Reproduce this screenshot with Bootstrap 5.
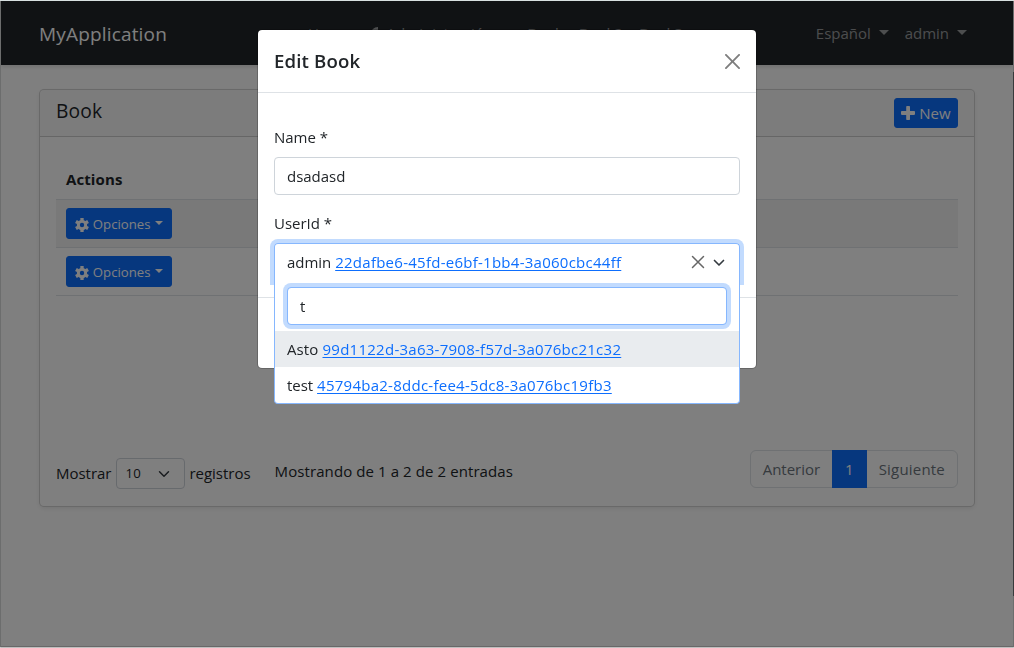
<!DOCTYPE html>
<html lang="es" class="h-100">
<head>
<meta charset="utf-8">
<meta name="viewport" content="width=device-width, initial-scale=1">
<title>MyApplication - Book</title>
<link href="https://cdn.jsdelivr.net/npm/bootstrap@5.3.0/dist/css/bootstrap.min.css" rel="stylesheet">
<style>
  body { font-family: "Open Sans", "Noto Sans", sans-serif; font-size: 15px; line-height: 24px; letter-spacing: -.02px; color: #212529; overflow: hidden; }
  .app-window { position: relative; height: 648px; border: 1px solid #d8dada; border-top-color: #d8e0e0; border-bottom-color: #bfbfbf; overflow: hidden; }
  .app-window::after { content: ""; position: absolute; top: 0; bottom: 0; left: 0; right: 0; border-bottom: 1px solid #d0d0d0; }
  .window-edge { position: fixed; top: 72px; right: 0; width: 1px; height: 524px; background: #707478; }
  .app-nav { height: 64px; padding: 0 38px; box-shadow: 0 2px 4px rgba(0,0,0,.12); }
  .app-nav .navbar-brand { font-size: 19px; line-height: 30px; letter-spacing: .17px; padding: 2px 0 0; margin: 0; width: 261px; }
  .app-nav .nav-link { color: rgba(255,255,255,.55); padding: 8px; white-space: nowrap; }
  .app-nav .dropdown-toggle::after { margin-left: 8px; border-top-width: 5px; border-left-width: 5px; border-right-width: 5px; vertical-align: 4px; }
  .app-nav .site-links .nav-link { line-height: 22px; }
  .app-nav .site-links .dropdown-toggle { letter-spacing: .1px; }
  .app-nav .site-links .dropdown-toggle span { margin-left: 2px; }
  .app-card { margin: 24px 38px 0; height: 418px; border-radius: 5px; box-shadow: 0 2px 4px rgba(0,0,0,.075); }
  .app-card .card-header { height: 47px; padding: 8px 16px; }
  .card-heading { font-size: 19.200px; line-height: 26px; font-weight: 500; letter-spacing: .2px; margin: 0; }
  .btn-new { width: 64px; height: 30px; padding: 0; font-size: 15px; line-height: 28px; border-radius: 3px; }
  .book-table { margin: 22px 0 0; }
  .book-table th { height: 40px; padding: 8px 10px; border-color: #dee2e6; letter-spacing: .1px; }
  .book-table td { height: 48px; padding: 8px 10px; border-color: #dee2e6; }
  .book-table tr.odd-row td { background: #f2f2f2; }
  .btn-options { width: 106px; height: 31px; padding: 1px 0 0; font-size: 13.2px; line-height: 28px; border-radius: 3px; }
  .btn-options::after { margin-left: 4px !important; border-top-width: 4px !important; border-left-width: 4px !important; border-right-width: 4px !important; vertical-align: 4px !important; }
  .table-foot { height: 56px; padding: 0 16px 18px; }
  .length-label { line-height: 22px; padding-bottom: 2px; }
  .length-select { width: 69px; height: 31px; padding: 3px 8px; font-size: 13.2px; background-position: right 12px center; margin: 0 4px 0 5px; letter-spacing: .2px; border-radius: 4px; border-color: #ced4da; }
  .table-info-text { padding-top: 9px; letter-spacing: .09px; margin-left: 24px; }
  .app-pages .page-link { height: 38px; padding: 6px 12px; color: #6c757d; border-color: #dee2e6; background: #fff; font-size: 15px; }
  .app-pages .page-item:last-child .page-link { letter-spacing: .2px; }
  .app-pages .active .page-link { background: #0d6efd; border-color: #0d6efd; color: #fff; }
  .modal-backdrop { top: 1px; height: 646px; }
  .edit-dialog { width: 500px; max-width: 500px; margin: 29px auto; }
  .edit-dialog .modal-content { height: 340px; border-radius: 5px; border-color: rgba(0,0,0,.2); }
  .edit-dialog .modal-header { height: 63px; padding: 16px; }
  .edit-dialog .btn-close { margin: -8px -8px -8px auto; }
  .edit-dialog .modal-title { font-size: 18.6px; line-height: 30px; font-weight: 600; letter-spacing: .15px; }
  .edit-dialog .modal-body { padding: 32px 16px 0; height: 204px; flex: none; }
  .edit-dialog .form-label { display: block; line-height: 24px; margin: 0 0 8px; color: #212529; }
  .edit-dialog .form-control { height: 38px; padding: 6px 12px; font-size: 15px; line-height: 24px; border-radius: 4px; letter-spacing: inherit; border-color: #ced4da; }
  .user-select { height: 42px; position: relative; }
  .user-value { height: 42px; padding: 6px 14px 12px 12px; border: 1px solid #86b7fe; border-bottom: 0; border-radius: 4px 4px 0 0; box-shadow: 0 0 0 4px #c2dbfe; clip-path: inset(-4px -4px 0 -4px); }
  .user-menu { position: absolute; top: 38px; left: 0; right: 0; height: 123px; background: #fff; border: 1px solid #86b7fe; border-top: 0; border-radius: 0 0 4px 4px; z-index: 3; }
  .user-search { margin: 6px 12px 6px; }
  .edit-dialog .user-search .form-control { border-color: #86b7fe; box-shadow: 0 0 0 4px #c2dbfe; }
  .user-option { height: 36px; padding: 6px 12px; }
  .user-option.highlighted { background: #e9ecef; letter-spacing: .12px; }
  .user-select a { color: #0d6efd; text-underline-offset: 2px; letter-spacing: .26px; }
</style>
</head>
<body>
<div class="app-window">
  <nav class="app-nav navbar navbar-dark bg-dark flex-nowrap">
    <a class="navbar-brand" href="#">MyApplication</a>
    <ul class="navbar-nav site-links flex-row flex-grow-1">
      <li class="nav-item"><a class="nav-link" href="#">Home</a></li>
      <li class="nav-item ms-1"><a class="nav-link dropdown-toggle" href="#"><svg width="14" height="16" viewBox="0 0 14 16" fill="currentColor"><path d="M8 0C4 0 1 3 1 6.500L0 13l2 2 5-5c4 1 7-2 6.500-6L11 6.500 8 5.500V3z"/></svg><span>Administración</span></a></li>
      <li class="nav-item"><a class="nav-link" href="#">Book</a></li>
      <li class="nav-item"><a class="nav-link" href="#">Book2</a></li>
      <li class="nav-item"><a class="nav-link" href="#">Book3</a></li>
    </ul>
    <ul class="navbar-nav flex-row">
      <li class="nav-item"><a class="nav-link dropdown-toggle" href="#">Español</a></li>
      <li class="nav-item"><a class="nav-link dropdown-toggle" href="#">admin</a></li>
    </ul>
  </nav>

  <main class="app-card card">
    <div class="card-header d-flex justify-content-between">
      <h5 class="card-heading">Book</h5>
      <button class="btn btn-primary btn-new d-flex align-items-center justify-content-center gap-1"><svg width="14" height="14" viewBox="0 0 14 14" fill="currentColor"><rect x="5.2" width="3.8" height="14" rx=".8"/><rect y="5.1" width="14" height="3.8" rx=".8"/></svg>New</button>
    </div>
    <div class="d-flex flex-column flex-grow-1">
      <div class="px-3 flex-grow-1">
        <table class="book-table table">
          <thead><tr><th>Actions</th></tr></thead>
          <tbody>
            <tr class="odd-row"><td><button class="btn btn-primary btn-options dropdown-toggle"><svg width="14" height="14" viewBox="0 0 16 16"><use href="#gear"/></svg> Opciones</button></td></tr>
            <tr><td><button class="btn btn-primary btn-options dropdown-toggle"><svg width="14" height="14" viewBox="0 0 16 16"><use href="#gear"/></svg> Opciones</button></td></tr>
          </tbody>
        </table>
      </div>
      <div class="table-foot d-flex align-items-start">
        <div class="d-flex align-items-center pt-2"><span class="length-label">Mostrar</span><select class="form-select length-select"><option>10</option></select><span class="length-label">registros</span></div>
        <div class="table-info-text">Mostrando de 1 a 2 de 2 entradas</div>
        <ul class="pagination app-pages mb-0 ms-auto">
          <li class="page-item"><a class="page-link">Anterior</a></li>
          <li class="page-item active"><a class="page-link">1</a></li>
          <li class="page-item"><a class="page-link">Siguiente</a></li>
        </ul>
      </div>
    </div>
  </main>
  <div class="window-edge"></div>
</div>

<svg class="d-none"><symbol id="gear" viewBox="0 0 16 16"><g fill="none" stroke="currentColor"><circle cx="8" cy="8" r="4.200" stroke-width="3.400"/><path stroke-width="3.800" d="M8 0v3M8 13v3M1.070 4l2.600 1.500M12.330 10.500l2.600 1.500M1.070 12l2.600-1.500M12.330 5.500l2.600-1.500"/></g></symbol></svg>

<div class="modal-backdrop show"></div>
<div class="modal d-block overflow-hidden" tabindex="-1">
  <div class="modal-dialog edit-dialog">
    <div class="modal-content">
      <div class="modal-header">
        <h5 class="modal-title">Edit Book</h5>
        <button type="button" class="btn-close" aria-label="Close"></button>
      </div>
      <div class="modal-body">
        <label class="form-label">Name *</label>
        <input class="form-control" value="dsadasd">
        <label class="form-label mt-3">UserId *</label>
        <div class="user-select">
          <div class="user-value d-flex align-items-center">
            <span class="flex-grow-1">admin <a href="#">22dafbe6-45fd-e6bf-1bb4-3a060cbc44ff</a></span>
            <svg width="14" height="14" viewBox="0 0 14 14" fill="none" stroke="#666" stroke-width="1.5" stroke-linecap="round"><path d="M1.500 1.500l11 11M12.500 1.500l-11 11"/></svg>
            <svg class="ms-2" width="12" height="12" viewBox="0 0 16 16" fill="none" stroke="#343a40" stroke-width="2.200" stroke-linecap="round" stroke-linejoin="round"><path d="m2 6 6 6 6-6"/></svg>
          </div>
          <div class="user-menu">
            <div class="user-search"><input class="form-control" value="t"></div>
            <div class="user-option highlighted">Asto <a href="#">99d1122d-3a63-7908-f57d-3a076bc21c32</a></div>
            <div class="user-option">test <a href="#">45794ba2-8ddc-fee4-5dc8-3a076bc19fb3</a></div>
          </div>
        </div>
      </div>
      <div class="modal-footer"></div>
    </div>
  </div>
</div>
<script src="https://cdn.jsdelivr.net/npm/bootstrap@5.3.0/dist/js/bootstrap.bundle.min.js"></script>
</body>
</html>
